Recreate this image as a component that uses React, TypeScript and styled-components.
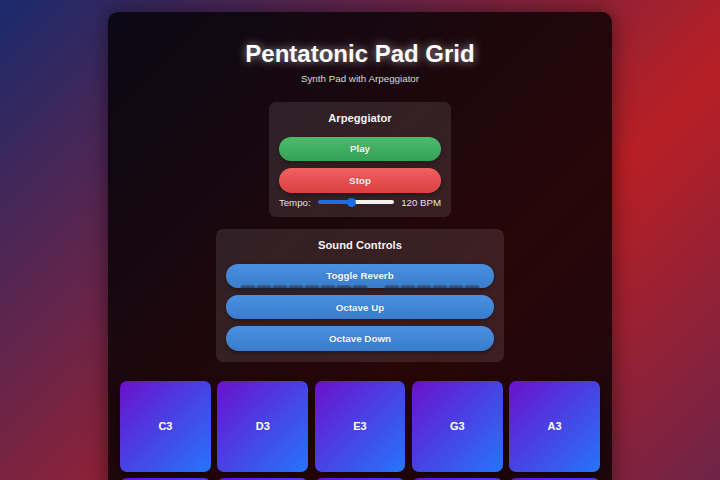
import React from "react";
import styled, { createGlobalStyle } from "styled-components";

const GlobalStyle = createGlobalStyle`
  html, body {
    margin: 0;
    padding: 0;
  }
  body {
    font-family: "Liberation Sans", Arial, sans-serif;
  }
  * { box-sizing: border-box; }
`;

const Page = styled.div`
  min-height: 100vh;
  padding: 12px 0;
  background: linear-gradient(135deg, #1a2a6c 0%, #b81f24 56%, #48265a 100%);
`;

const Container = styled.div`
  width: 504px;
  margin: 0 auto;
  padding: 12px;
  border-radius: 10px;
  background: rgba(0, 0, 0, 0.78);
  box-shadow: 0 0 20px rgba(0, 0, 0, 0.5);
  display: flex;
  flex-direction: column;
  align-items: center;
`;

const Title = styled.h1`
  margin: 16px 0 0;
  font-size: 24px;
  line-height: 27.6px;
  font-weight: 700;
  color: #fff;
  text-shadow: 0 0 10px rgba(255, 255, 255, 0.6);
`;

const Subtitle = styled.p`
  margin: 5.4px 0 0;
  font-size: 9.8px;
  line-height: 11px;
  color: #dadada;
`;

const Panel = styled.section<{ $width: number; $top: number; $bottom: number }>`
  width: ${(p) => p.$width}px;
  margin-top: ${(p) => p.$top}px;
  padding: 9.4px 9.6px ${(p) => p.$bottom}px;
  border-radius: 7px;
  background: rgba(255, 255, 255, 0.1);
  display: flex;
  flex-direction: column;
`;

const PanelTitle = styled.h3`
  margin: 0 0 12px;
  font-size: 11.2px;
  line-height: 12.9px;
  font-weight: 700;
  color: #f2f2f2;
  text-align: center;
`;

const tones = {
  green: ["#4dba6c", "#35a155"],
  red: ["#f26060", "#dc3f40"],
  blue: ["#4a90e2", "#3a7ccc"],
};

const PillButton = styled.button<{ $tone: keyof typeof tones; $gap?: number }>`
  display: block;
  width: 100%;
  height: 24.8px;
  margin: 0 0 ${(p) => p.$gap ?? 0}px;
  padding: 0;
  border: none;
  border-radius: 13px;
  background: linear-gradient(
    to bottom,
    ${(p) => tones[p.$tone][0]},
    ${(p) => tones[p.$tone][1]}
  );
  box-shadow: 0 2px 4px rgba(0, 0, 0, 0.35);
  color: #f4f6fb;
  font-family: "Liberation Sans", Arial, sans-serif;
  font-size: 9.8px;
  font-weight: 700;
  text-shadow: 0 0 2px rgba(0, 0, 0, 0.15);
  cursor: pointer;
`;

const TempoRow = styled.div`
  margin-top: 2px;
  height: 14px;
  display: flex;
  align-items: center;
  justify-content: space-between;
  font-size: 9.7px;
  color: #e2e2e2;
`;

const Slider = styled.input`
  -webkit-appearance: none;
  appearance: none;
  width: 76px;
  height: 4.5px;
  margin: 0;
  border-radius: 3px;
  outline: none;

  &::-webkit-slider-thumb {
    -webkit-appearance: none;
    appearance: none;
    width: 9px;
    height: 9px;
    border-radius: 50%;
    background: #1a6fe6;
    border: none;
  }
`;

const ReverbWrap = styled.div`
  position: relative;
  margin-bottom: 6.3px;
`;

const StepRow = styled.div`
  position: absolute;
  left: 50%;
  bottom: -3.4px;
  transform: translateX(-50%);
  display: flex;
  gap: 1px;
  pointer-events: none;
`;

const Step = styled.span<{ $active: boolean }>`
  width: 15px;
  height: 7px;
  border-radius: 2px 2px 1px 1px;
  background: ${(p) =>
    p.$active
      ? "transparent"
      : "linear-gradient(to bottom, rgba(45, 50, 75, 0.4), rgba(35, 32, 45, 0.95))"};
`;

const PadGrid = styled.div`
  margin-top: 18.7px;
  width: 100%;
  display: grid;
  grid-template-columns: repeat(5, 1fr);
  gap: 6.4px;
`;

const Pad = styled.button`
  aspect-ratio: 1 / 1;
  border: none;
  border-radius: 7px;
  padding: 0;
  background: linear-gradient(135deg, #6a11cb 0%, #2575fc 100%);
  box-shadow: 0 3px 8px rgba(0, 0, 0, 0.4);
  color: #fff;
  font-family: "Liberation Sans", Arial, sans-serif;
  font-size: 11px;
  font-weight: 700;
  cursor: pointer;
`;

const notes = ["C", "D", "E", "G", "A"];
const octaves = [3, 4, 5];
const pads = octaves.flatMap((o) => notes.map((n) => `${n}${o}`));

const MIN_BPM = 60;
const MAX_BPM = 200;

export default function App() {
  const [tempo, setTempo] = React.useState(120);
  const activeStep = 8;
  const pct = ((tempo - MIN_BPM) / (MAX_BPM - MIN_BPM)) * 100;
  return (
    <>
      <GlobalStyle />
      <Page>
        <Container>
          <Title>Pentatonic Pad Grid</Title>
          <Subtitle>Synth Pad with Arpeggiator</Subtitle>

          <Panel $width={181.4} $top={18.3} $bottom={7.8}>
            <PanelTitle>Arpeggiator</PanelTitle>
            <PillButton $tone="green" $gap={7}>Play</PillButton>
            <PillButton $tone="red">Stop</PillButton>
            <TempoRow>
              <span>Tempo:</span>
              <Slider
                type="range"
                min={MIN_BPM}
                max={MAX_BPM}
                value={tempo}
                onChange={(e) => setTempo(Number(e.target.value))}
                style={{
                  background: `linear-gradient(to right, #1a6fe6 0%, #1a6fe6 ${pct}%, #f2f2f2 ${pct}%, #f2f2f2 100%)`,
                }}
              />
              <span>{tempo} BPM</span>
            </TempoRow>
          </Panel>

          <Panel $width={287.4} $top={12.3} $bottom={11.6}>
            <PanelTitle>Sound Controls</PanelTitle>
            <ReverbWrap>
              <PillButton $tone="blue">Toggle Reverb</PillButton>
              <StepRow>
                {pads.map((p, i) => (
                  <Step key={p} $active={i === activeStep} />
                ))}
              </StepRow>
            </ReverbWrap>
            <PillButton $tone="blue" $gap={6.3}>Octave Up</PillButton>
            <PillButton $tone="blue">Octave Down</PillButton>
          </Panel>

          <PadGrid>
            {pads.map((p) => (
              <Pad key={p}>{p}</Pad>
            ))}
          </PadGrid>
        </Container>
      </Page>
    </>
  );
}
